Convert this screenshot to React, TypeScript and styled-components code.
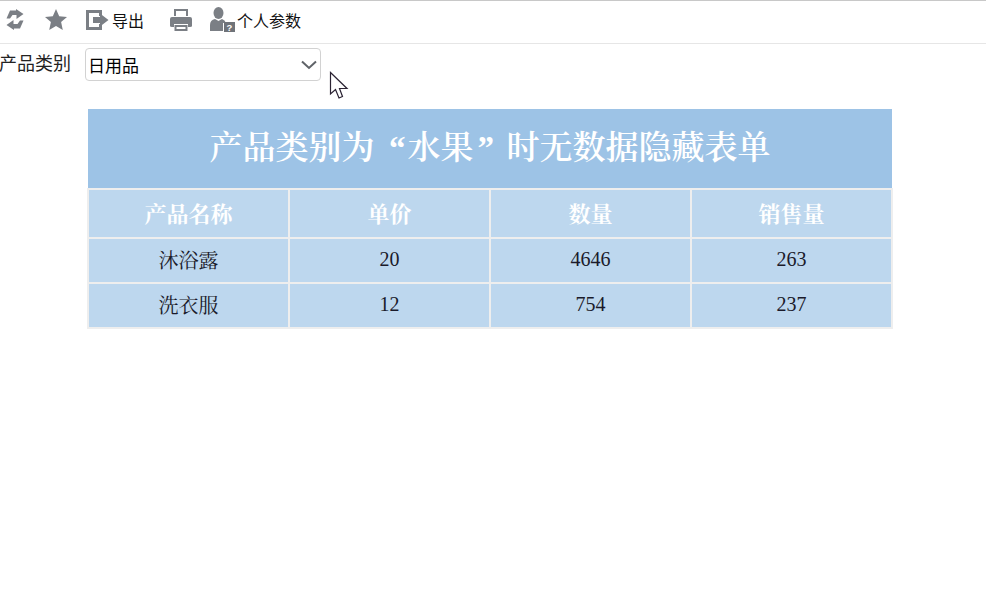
import styled, { createGlobalStyle } from 'styled-components';

const serif = `"Liberation Serif", "Noto Serif CJK SC", "Noto Sans CJK SC", serif`;
const sans = `"Liberation Sans", "Noto Sans CJK SC", sans-serif`;

const GlobalStyle = createGlobalStyle`
  html, body {
    margin: 0;
    background: #fff;
    font-family: ${sans};
  }
`;

const Page = styled.div`
  position: relative;
  height: 594px;
  overflow: hidden;
  border-top: 1px solid #c8c8c8;
  box-sizing: border-box;
`;

const Toolbar = styled.div`
  display: flex;
  align-items: center;
  height: 37px;
  padding: 0 0 5px 6px;
  border-bottom: 1px solid #e6e6e6;
`;

const ToolButton = styled.div<{ $width: number }>`
  display: flex;
  align-items: center;
  width: ${(p) => p.$width}px;
  flex: none;
`;

const ToolLabel = styled.span`
  font-size: 16px;
  color: #111;
  white-space: nowrap;
`;

const FilterRow = styled.div`
  display: flex;
  align-items: center;
  height: 33px;
  margin-top: 4px;
`;

const FilterLabel = styled.label`
  width: 86px;
  margin-left: -1px;
  flex: none;
  font-size: 18px;
  line-height: 33px;
  color: #222;
  white-space: nowrap;
`;

const SelectBox = styled.div`
  display: flex;
  align-items: center;
  justify-content: space-between;
  width: 236px;
  height: 33px;
  padding: 0 3px 0 2px;
  box-sizing: border-box;
  border: 1px solid #d2d2d2;
  border-radius: 4px;
  font-size: 17px;
  color: #000;
`;

const Report = styled.div`
  width: 806px;
  margin: 28px 0 0 87px;
`;

const Title = styled.div`
  height: 79px;
  margin: 0 1px;
  background: #9dc3e6;
  color: #fff;
  font-family: ${serif};
  font-size: 33px;
  font-weight: 600;
  line-height: 79px;
  text-align: center;
`;

const Quote = styled.span<{ $open?: boolean }>`
  display: inline-block;
  width: 33px;
  box-sizing: border-box;
  text-align: ${(p) => (p.$open ? 'right' : 'left')};
  padding: ${(p) => (p.$open ? '0 2px 0 0' : '0 0 0 4px')};
`;

const Table = styled.table`
  width: 806px;
  table-layout: fixed;
  border-collapse: collapse;
  font-family: ${serif};
`;

const HeadCell = styled.th`
  height: 45px;
  padding: 0 0 2px;
  border: 2px solid #eeeeee;
  background: #bdd7ee;
  color: #fff;
  font-size: 22px;
  font-weight: bold;
  text-align: center;
`;

const BodyCell = styled.td`
  height: 41px;
  padding: 0 0 2px;
  border: 2px solid #eeeeee;
  background: #bdd7ee;
  color: #1a1a2a;
  font-size: 20px;
  text-align: center;
`;

const Cursor = styled.svg`
  position: absolute;
  left: 329px;
  top: 70px;
`;

const rows = [
  ['沐浴露', '20', '4646', '263'],
  ['洗衣服', '12', '754', '237'],
];

const iconGray = '#7b7f85';
const arrowPath = 'M0.5 9.5 L4 1.5 H10 V0 L17.5 5 L10.5 10 V6 H6.5 L4 9.5 Z';

const App = () => (
  <Page>
    <GlobalStyle />
    <Toolbar>
      <ToolButton $width={39}>
        <svg width="18" height="21" viewBox="0 0 18 21" fill={iconGray}>
          <path d={arrowPath} />
          <path d={arrowPath} transform="rotate(180 9 10.5)" />
        </svg>
      </ToolButton>
      <ToolButton $width={41}>
        <svg width="22" height="21" viewBox="0 0 22 21" fill={iconGray}>
          <path d="M11 0 L14.2 7.2 L22 8 L16.1 13.1 L17.8 21 L11 17 L4.2 21 L5.9 13.1 L0 8 L7.8 7.2 Z" />
        </svg>
      </ToolButton>
      <ToolButton $width={84}>
        <svg width="23" height="20" viewBox="0 0 23 20" fill={iconGray} style={{ marginRight: 3 }}>
          <path d="M0 0 H16 V6 H13 V3 H3 V17 H13 V14 H16 V20 H0 Z" />
          <path d="M7 7 H14 V3.5 L22.5 10 L14 16.5 V13 H7 Z" />
        </svg>
        <ToolLabel>导出</ToolLabel>
      </ToolButton>
      <ToolButton $width={40}>
        <svg width="22" height="22" viewBox="0 0 22 22" fill={iconGray}>
          <path d="M4 0 H18 V7 H16 V2 H6 V7 H4 Z" />
          <path d="M2 8 H20 Q22 8 22 10 V17 Q22 18 20 18 H18 V15 H4 V18 H2 Q0 18 0 17 V10 Q0 8 2 8 Z" />
          <path d="M4.5 16 H17.5 V22 H4.5 Z M6.5 18 V20 H15.5 V18 Z" fillRule="evenodd" />
        </svg>
      </ToolButton>
      <ToolButton $width={100}>
        <svg width="26" height="25" viewBox="0 0 26 25" style={{ marginRight: 1 }}>
          <ellipse cx="8.5" cy="6" rx="5" ry="6" fill={iconGray} />
          <path d="M0 24 V18 Q0 13 5 12 L8.5 14 L12 12 Q15 13 16 16 H13 V24 Z" fill={iconGray} />
          <rect x="14" y="15" width="11" height="10" fill="#6f7379" />
          <text x="19.5" y="23.5" fontSize="9.5" fontWeight="bold" fontFamily="Liberation Sans" textAnchor="middle" fill="#fff">?</text>
        </svg>
        <ToolLabel>个人参数</ToolLabel>
      </ToolButton>
    </Toolbar>
    <FilterRow>
      <FilterLabel>产品类别</FilterLabel>
      <SelectBox>
        日用品
        <svg width="16" height="10" viewBox="0 0 16 10" fill="none" stroke="#5f6368" strokeWidth="2">
          <path d="M1 1.5 L8 8 L15 1.5" />
        </svg>
      </SelectBox>
    </FilterRow>
    <Report>
      <Title>
        产品类别为<Quote $open>“</Quote>水果<Quote>”</Quote>时无数据隐藏表单
      </Title>
      <Table>
        <thead>
          <tr>
            <HeadCell>产品名称</HeadCell>
            <HeadCell>单价</HeadCell>
            <HeadCell>数量</HeadCell>
            <HeadCell>销售量</HeadCell>
          </tr>
        </thead>
        <tbody>
          {rows.map((row) => (
            <tr key={row[0]}>
              {row.map((cell) => (
                <BodyCell key={cell}>{cell}</BodyCell>
              ))}
            </tr>
          ))}
        </tbody>
      </Table>
    </Report>
    <Cursor width="20" height="29" viewBox="0 0 20 29">
      <path d="M1.5 1.5 V23 L6.5 18.5 L10 27 L13.5 25.5 L10.5 17.5 L18 17.5 Z" fill="#fff" stroke="#2b2333" strokeWidth="1.2" />
    </Cursor>
  </Page>
);

export default App;
